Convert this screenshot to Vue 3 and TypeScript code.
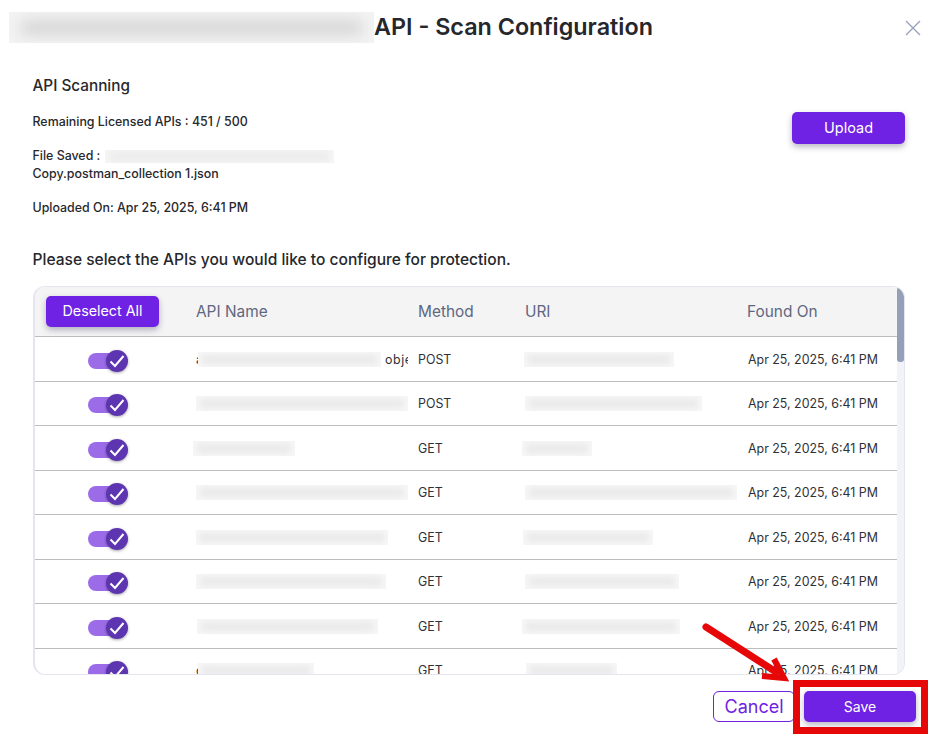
<script setup lang="ts">
interface Blur { x: number; w: number }
interface Row { name: Blur; uri: Blur; method: string; prefix?: string; suffix?: string }

const rows: Row[] = [
  { name: { x: 0, w: 183 }, uri: { x: -1, w: 150 }, method: 'POST', prefix: 'a', suffix: 'obje' },
  { name: { x: 0, w: 212 }, uri: { x: 0, w: 177 }, method: 'POST' },
  { name: { x: -3, w: 102 }, uri: { x: -3, w: 70 }, method: 'GET' },
  { name: { x: 0, w: 212 }, uri: { x: 0, w: 212 }, method: 'GET' },
  { name: { x: 0, w: 192 }, uri: { x: -2, w: 130 }, method: 'GET' },
  { name: { x: 0, w: 190 }, uri: { x: 0, w: 154 }, method: 'GET' },
  { name: { x: 1, w: 181 }, uri: { x: -3, w: 158 }, method: 'GET' },
  { name: { x: 0, w: 116 }, uri: { x: 1, w: 91 }, method: 'GET', prefix: 'c' },
]
const date = 'Apr 25, 2025, 6:41 PM'
</script>

<template>
  <div class="modal">
    <header class="title-row">
      <span class="redact title-redact"><i></i></span>
      <h1>API - Scan Configuration</h1>
      <svg class="close" width="16" height="16" viewBox="0 0 16 16" aria-label="Close">
        <path d="M1 1 15 15M15 1 1 15" stroke="#98a2b8" stroke-width="1.4" fill="none" />
      </svg>
    </header>

    <section class="info">
      <div class="info-text">
        <h2>API Scanning</h2>
        <p>Remaining Licensed APIs : 451 / 500</p>
        <p class="file">
          File Saved : <span class="redact file-redact"><i></i></span><br />
          Copy.postman_collection 1.json
        </p>
        <p class="uploaded">Uploaded On: {{ date }}</p>
      </div>
      <button class="btn upload">Upload</button>
    </section>

    <h3>Please select the APIs you would like to configure for protection.</h3>

    <div class="table-frame">
      <div class="row head">
        <div class="cell toggle-cell"><button class="btn deselect">Deselect All</button></div>
        <div class="cell">API Name</div>
        <div class="cell">Method</div>
        <div class="cell">URI</div>
        <div class="cell">Found On</div>
      </div>
      <div v-for="(r, i) in rows" :key="i" class="row">
        <div class="cell toggle-cell">
          <span class="toggle">
            <span class="knob">
              <svg width="16" height="14" viewBox="0 0 16 14">
                <path d="M1.5 7.5 6 12 14.5 2" stroke="#fff" stroke-width="2" fill="none" />
              </svg>
            </span>
          </span>
        </div>
        <div class="cell clip">
          <span v-if="r.prefix" class="prefix">{{ r.prefix }}</span>
          <span class="redact cell-redact" :style="{ marginLeft: r.name.x + 'px', width: r.name.w + 'px' }"><i></i></span>
          <span v-if="r.suffix" class="suffix">{{ r.suffix }}</span>
        </div>
        <div class="cell">{{ r.method }}</div>
        <div class="cell clip">
          <span class="redact cell-redact" :style="{ marginLeft: r.uri.x + 'px', width: r.uri.w + 'px' }"><i></i></span>
        </div>
        <div class="cell date">{{ date }}</div>
      </div>
      <div class="scroll-track"><div class="scroll-thumb"></div></div>
    </div>

    <footer class="actions">
      <button class="cancel">Cancel</button>
      <button class="btn save">Save</button>
    </footer>

    <div class="red-box"></div>
    <svg class="red-arrow" width="100" height="70" viewBox="0 0 100 70">
      <path d="M6 5 76 50" stroke="#e60808" stroke-width="7" stroke-linecap="round" fill="none" />
      <path d="M74 37 84 56 62 54" stroke="#e60808" stroke-width="6" stroke-linejoin="miter" fill="none" />
    </svg>
  </div>
</template>

<style>
html, body { margin: 0; background: #fff; }
</style>

<style scoped>
.modal {
  position: relative;
  width: 936px;
  height: 738px;
  box-sizing: border-box;
  overflow: hidden;
  background: #fff;
  padding: 12px 31px 0 33px;
  font-family: Inter, "Liberation Sans", sans-serif;
  color: #27282c;
}
.redact {
  position: relative;
  display: inline-block;
  overflow: hidden;
  background: #f7f7f7;
  vertical-align: middle;
}
.redact i {
  position: absolute;
  inset: 4px 6px;
  background: #e9e9e9;
  filter: blur(4px);
}
.title-row {
  display: flex;
  align-items: center;
  height: 31px;
  margin-left: -24px;
}
.title-redact { width: 365px; height: 31px; flex: none; background: #f3f3f3; }
.title-redact i { inset: 8px 12px; background: #d6d6d6; filter: blur(7px); }
h1 {
  margin: -2px 0 0 0;
  font-size: 23.35px;
  font-weight: 600;
  color: #25272c;
  white-space: nowrap;
}
.close { margin-left: auto; margin-right: -16px; margin-top: 1px; flex: none; }
.info {
  display: flex;
  justify-content: space-between;
  margin-top: 33px;
}
.info-text { margin-left: -0.5px; }
h2 {
  margin: 0;
  font-size: 15.3px;
  line-height: 20px;
  font-weight: 500;
}
.info p {
  margin: 17px 0 0;
  font-size: 12.4px;
  line-height: 18px;
  font-weight: 500;
}
.info p.file, .info p.uploaded { margin-top: 16px; }
.file-redact { width: 229px; height: 13px; margin-left: 1px; }
.file-redact i { inset: 2px 4px; }
.btn {
  border: 0;
  border-radius: 5px;
  background: #6f22e3;
  color: #fff;
  font-family: inherit;
  font-weight: 400;
  font-size: 14px;
  box-shadow: 0 3px 6px rgba(40, 30, 70, .32);
  padding: 0 0 1px;
}
.upload { width: 113px; height: 32px; margin-top: 36px; font-size: 14.5px; }
h3 {
  margin: 33px 0 0 -0.5px;
  font-size: 15.55px;
  line-height: 20px;
  font-weight: 500;
  color: #25272c;
}
.table-frame {
  position: relative;
  margin-top: 16px;
  height: 389px;
  box-sizing: border-box;
  border: 1px solid #e4e5ef;
  border-left-width: 2px;
  border-radius: 12px;
  overflow: hidden;
  background: #fff;
}
.scroll-track {
  position: absolute;
  top: 0;
  right: 0;
  bottom: 0;
  width: 7px;
  background: #f1f3f9;
}
.scroll-thumb {
  width: 7px;
  height: 75px;
  border-radius: 3px;
  background: #94a0b8;
}
.row {
  display: grid;
  grid-template-columns: 145px 228px 101px 228px 160px;
  height: 44.5px;
  box-sizing: border-box;
  border-bottom: 1px solid #bdbdc0;
  font-size: 12.4px;
  color: #2f3136;
}
.head {
  height: 50px;
  background: #f4f4f5;
  font-size: 15.4px;
  color: #5f6780;
}
.cell {
  display: flex;
  align-items: center;
  min-width: 0;
  padding: 1px 0 0 10px;
  white-space: nowrap;
}
.head .cell { padding-top: 0; }
.cell.clip, .head .cell:nth-child(2), .head .cell:nth-child(4) { padding-left: 16px; }
.cell.date { padding-left: 11px; }
.clip { overflow: hidden; }
.cell.toggle-cell { padding: 0; justify-content: center; }
.deselect { width: 113px; height: 31px; margin-left: -10px; margin-top: -1px; font-size: 14.3px; }
.toggle {
  position: relative;
  display: block;
  width: 34px;
  height: 16px;
  margin-left: -6px;
  margin-top: 4px;
  border-radius: 8px;
  background: #9c6ce8;
}
.knob {
  position: absolute;
  right: -6px;
  top: -3px;
  width: 22px;
  height: 22px;
  border-radius: 50%;
  background: #5e35b1;
  box-shadow: 0 1px 3px rgba(0, 0, 0, .35);
  display: flex;
  align-items: center;
  justify-content: center;
}
.cell-redact { height: 15px; flex: none; }
.cell-redact i { inset: 3px 4px; filter: blur(3px); }
.prefix { width: 2px; overflow: hidden; flex: none; }
.suffix { margin-left: 4px; letter-spacing: .6px; flex: none; }
.actions {
  display: flex;
  justify-content: flex-end;
  gap: 9px;
  margin-top: 16px;
  margin-right: -11px;
}
.cancel {
  width: 82px;
  height: 31px;
  box-sizing: border-box;
  border: 1px solid #6f22e3;
  border-radius: 6px;
  background: #fff;
  color: #6f22e3;
  font-family: inherit;
  font-size: 18px;
  padding: 0;
}
.save { width: 112px; height: 31px; }
.red-box {
  position: absolute;
  left: 793px;
  top: 680px;
  width: 135px;
  height: 54px;
  box-sizing: border-box;
  border: 7px solid #e60808;
  pointer-events: none;
}
.red-arrow {
  position: absolute;
  left: 700px;
  top: 622px;
  pointer-events: none;
}
</style>
